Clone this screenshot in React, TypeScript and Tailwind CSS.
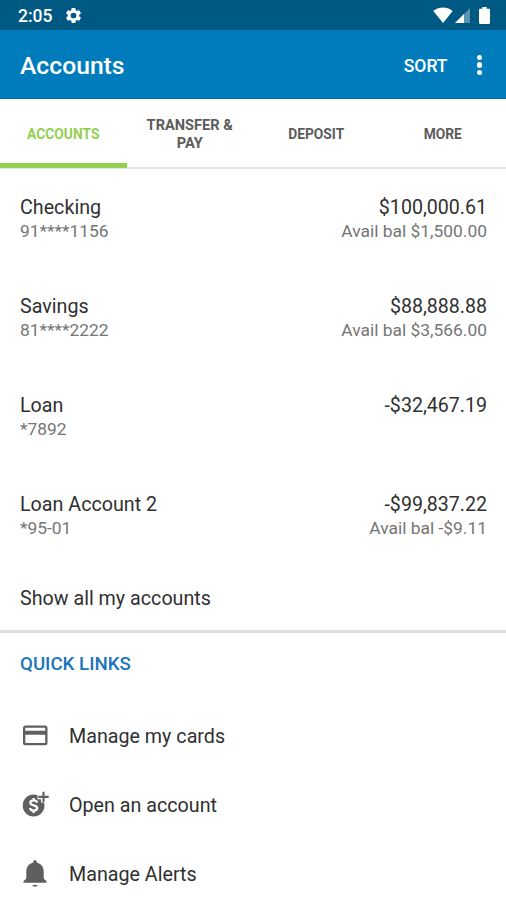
import React, { useState } from "react";

type Account = {
    name: string;
    number: string;
    balance: string;
    available?: string;
};

const accounts: Account[] = [
    { name: "Checking", number: "91****1156", balance: "$100,000.61", available: "Avail bal $1,500.00" },
    { name: "Savings", number: "81****2222", balance: "$88,888.88", available: "Avail bal $3,566.00" },
    { name: "Loan", number: "*7892", balance: "-$32,467.19" },
    { name: "Loan Account 2", number: "*95-01", balance: "-$99,837.22", available: "Avail bal -$9.11" },
];

// two-line labels are set slightly larger than the single-line ones
const tabs = [
    { label: "Accounts", size: "text-[13.8px]" },
    { label: "Transfer & Pay", size: "text-[14.6px]" },
    { label: "Deposit", size: "text-[13.8px]" },
    { label: "More", size: "text-[13.8px]" },
];

const GearIcon = () => (
    <svg className="w-[19px] h-[19px]" viewBox="0 0 24 24" fill="currentColor">
        <path d="M19.14 12.94c.04-.3.06-.61.06-.94 0-.32-.02-.64-.07-.94l2.03-1.58a.49.49 0 0 0 .12-.61l-1.92-3.32a.488.488 0 0 0-.59-.22l-2.39.96c-.5-.38-1.03-.7-1.62-.94l-.36-2.54a.484.484 0 0 0-.48-.41h-3.84c-.24 0-.43.17-.47.41l-.36 2.54c-.59.24-1.13.57-1.62.94l-2.39-.96c-.22-.08-.47 0-.59.22L2.74 8.87c-.12.21-.08.47.12.61l2.03 1.58c-.05.3-.09.63-.09.94s.02.64.07.94l-2.03 1.58a.49.49 0 0 0-.12.61l1.92 3.32c.12.22.37.29.59.22l2.39-.96c.5.38 1.03.7 1.62.94l.36 2.54c.05.24.24.41.48.41h3.84c.24 0 .44-.17.47-.41l.36-2.54c.59-.24 1.13-.56 1.62-.94l2.39.96c.22.08.47 0 .59-.22l1.92-3.32c.12-.22.07-.47-.12-.61l-2.01-1.58zM12 15.6A3.6 3.6 0 1 1 12 8.4a3.6 3.6 0 0 1 0 7.2z" />
    </svg>
);

const WifiIcon = () => (
    <svg className="w-5 h-4" viewBox="0 0 20 16" fill="currentColor">
        <path d="M10 16 .3 4.1C.9 3.6 4.4.6 10 .6s9.1 3 9.7 3.5L10 16z" />
    </svg>
);

const SignalIcon = () => (
    <svg className="w-[15px] h-[15px]" viewBox="0 0 15 15" fill="currentColor">
        <path d="M0 15 15 0v15z" opacity="0.35" />
        <path d="M0 15 9 6v9z" />
    </svg>
);

const BatteryIcon = () => (
    <svg className="w-[11px] h-[17px]" viewBox="0 0 11 17" fill="currentColor">
        <path d="M3.3 0h4.4v1.7h2.1c.7 0 1.2.5 1.2 1.2v12.9c0 .7-.5 1.2-1.2 1.2H1.2C.5 17 0 16.5 0 15.8V2.9c0-.7.5-1.2 1.2-1.2h2.1z" />
    </svg>
);

const CardIcon = () => (
    <svg className="w-[30px] h-[30px]" viewBox="0 0 30 30" fill="currentColor">
        <path d="M25.2 4.5H5.3C4 4.5 3 5.5 3 6.8V22c0 1.3 1 2.3 2.3 2.3h19.9c1.3 0 2.3-1 2.3-2.3V6.8c0-1.3-1-2.3-2.3-2.3zm0 17.5H5.3V13.8h19.9zm0-12.2H5.3V6.8h19.9z" />
    </svg>
);

const OpenAccountIcon = () => (
    <svg className="w-[30px] h-[30px]" viewBox="0 0 30 30" fill="none">
        <circle cx="13.6" cy="15.5" r="10.9" fill="currentColor" />
        <path d="M23.3 1.5v11M17.5 7h11" stroke="#fff" strokeWidth="4.5" />
        <path d="M23.5 1.7v10.4M18.3 6.9h10.4" stroke="currentColor" strokeWidth="2.1" />
        <path
            d="M17 12.6c-.3-1.5-1.6-2.3-3.4-2.3-1.9 0-3.3.9-3.3 2.5 0 3.5 6.9 1.7 6.9 5.3 0 1.6-1.5 2.5-3.5 2.5-2 0-3.4-.9-3.7-2.6M13.6 8.1v2.4M13.6 20.4v2.5"
            stroke="#fff"
            strokeWidth="2.2"
        />
    </svg>
);

const BellIcon = () => (
    <svg className="w-[30px] h-[30px]" viewBox="0 0 30 30" fill="currentColor">
        <path d="M15 27.5c1.5 0 2.6-.6 2.6-1.6h-5.2c0 1 1.1 1.6 2.6 1.6zM23.7 19.6v-7.1c0-4.4-2.5-7.7-6.5-8.7l-.3-.8c-.4-1-1-1.8-1.9-2.2-.9.4-1.5 1.2-1.9 2.2l-.3.8c-4 1-6.5 4.3-6.5 8.7v7.1l-2.8 2.6v1.6h23v-1.6z" />
    </svg>
);

const quickLinks = [
    { label: "Manage my cards", icon: <CardIcon /> },
    { label: "Open an account", icon: <OpenAccountIcon /> },
    { label: "Manage Alerts", icon: <BellIcon /> },
];

export default function App() {
    const [activeTab, setActiveTab] = useState("Accounts");

    return (
        <div className="w-full h-[900px] overflow-hidden bg-white font-['Roboto',sans-serif] text-[#303030]">
            {/* Status bar */}
            <div className="flex items-center justify-between h-[30px] pl-[18px] pr-4 bg-[#005983] text-white">
                <div className="flex items-center gap-3 pt-px">
                    <span className="text-[17.5px] leading-5 font-medium">2:05</span>
                    <GearIcon />
                </div>
                <div className="flex items-center">
                    <WifiIcon />
                    <span className="ml-[2px]"><SignalIcon /></span>
                    <span className="ml-[9px]"><BatteryIcon /></span>
                </div>
            </div>

            {/* App bar */}
            <header className="flex items-center h-[69px] pl-5 pr-6 pt-1 border-b border-[#0068a8] bg-[#007cbc] text-white">
                <h1 className="flex-1 text-[24.7px] font-medium">Accounts</h1>
                <button className="text-[17.5px] font-medium">SORT</button>
                <button aria-label="More options" className="ml-[29px] flex flex-col gap-[2px] -mt-0.5">
                    <span className="w-[5.5px] h-[5.5px] rounded-full bg-white" />
                    <span className="w-[5.5px] h-[5.5px] rounded-full bg-white" />
                    <span className="w-[5.5px] h-[5.5px] rounded-full bg-white" />
                </button>
            </header>

            {/* Tabs */}
            <nav className="grid grid-cols-4 h-[70px] border-b-2 border-[#e4e4e4]">
                {tabs.map((tab) => (
                    <button
                        key={tab.label}
                        onClick={() => setActiveTab(tab.label)}
                        className={`-mb-px px-4 pt-[7px] leading-[17.5px] font-bold uppercase border-b-[5px] ${tab.size} ${
                            activeTab === tab.label ? "text-[#92d050] border-[#92d050]" : "text-[#5c5c5c] border-transparent"
                        }`}
                    >
                        {tab.label}
                    </button>
                ))}
            </nav>

            {/* Accounts list */}
            <ul>
                {accounts.map((account) => (
                    <li key={account.name} className="flex justify-between h-[99px] pl-5 pr-[19px] pt-[27px]">
                        <div>
                            <div className="text-[19.7px] leading-6">{account.name}</div>
                            <div className="text-[17.4px] leading-[23px] text-[#757575]">{account.number}</div>
                        </div>
                        <div className="text-right">
                            <div className="text-[19.6px] leading-6">{account.balance}</div>
                            <div className="text-[17.4px] leading-[23px] text-[#757575]">{account.available}</div>
                        </div>
                    </li>
                ))}
            </ul>
            <button className="flex items-center w-full h-[68px] px-5 pt-0.5 text-[19.7px] border-b-[3px] border-[#dcdcdc]">
                Show all my accounts
            </button>

            {/* Quick links */}
            <section>
                <h2 className="h-[68px] px-5 pt-[19px] text-[18.7px] leading-6 font-medium text-[#1b75bb]">QUICK LINKS</h2>
                <ul>
                    {quickLinks.map((link) => (
                        <li key={link.label} className="flex items-center h-[69px] pl-5 gap-[19px] text-[19.7px]">
                            <span className="text-[#5f5f5f]">{link.icon}</span>
                            <span className="pt-0.5">{link.label}</span>
                        </li>
                    ))}
                </ul>
            </section>
        </div>
    );
}
